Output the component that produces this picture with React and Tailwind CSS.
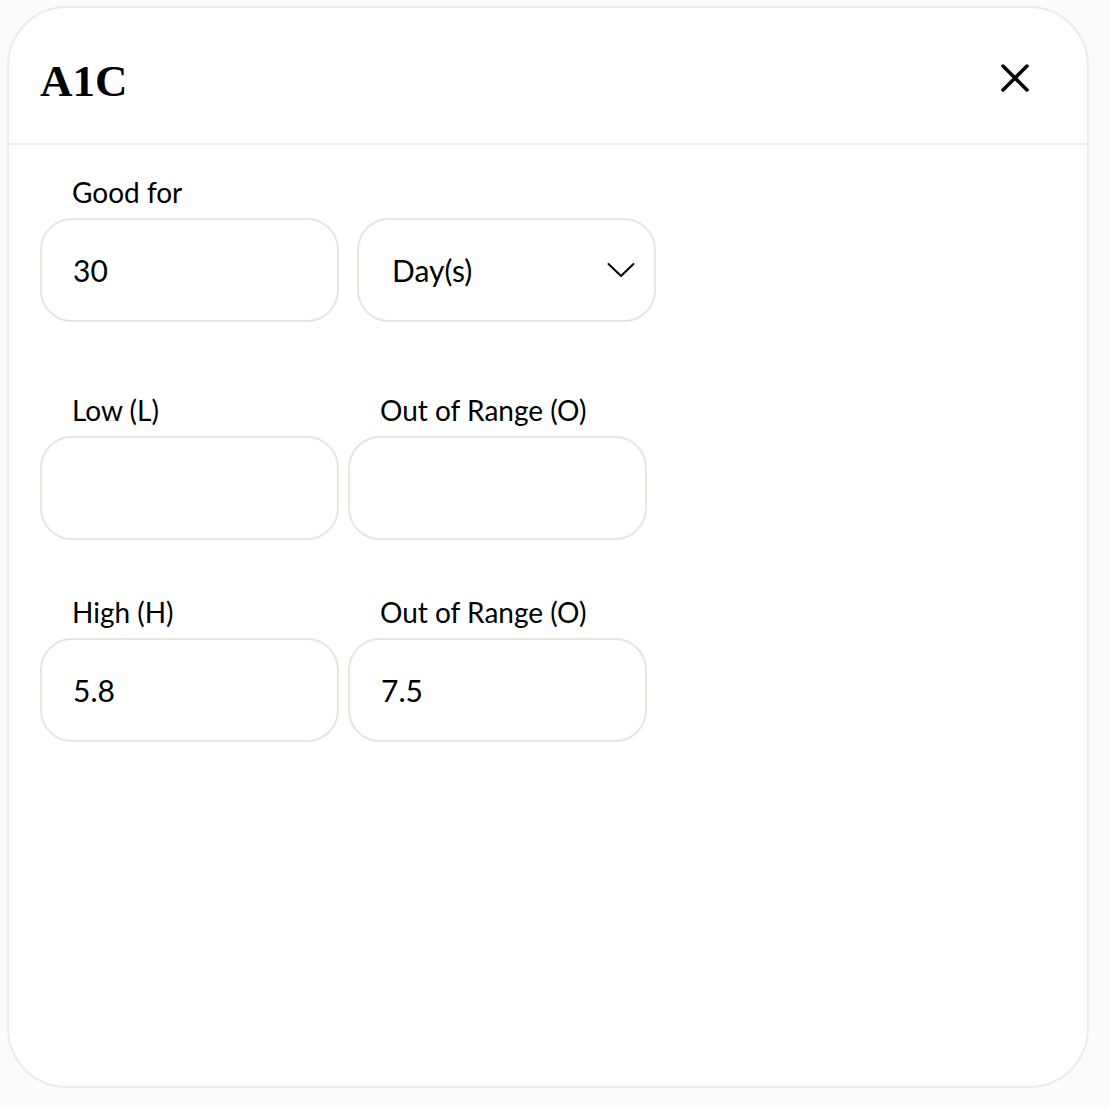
import { useState } from 'react';

// Campo con etiqueta y caja redondeada
function Field({ label, value, onChange, className = '' }) {
  return (
    <div className={`flex flex-col w-[299px] ${className}`}>
      <label className="pl-[32px] text-[28px] leading-[34px] text-black mb-[9px]">{label}</label>
      <input
        type="text"
        value={value}
        onChange={onChange}
        className="h-[104px] w-full rounded-[32px] border-2 border-[#e8e5da] bg-white px-[31px] text-[30px] text-black outline-none"
        style={{ fontFamily: 'Lato, "Noto Sans", sans-serif' }}
      />
    </div>
  );
}

export default function App() {
  const [goodFor, setGoodFor] = useState('30');
  const [low, setLow] = useState('');
  const [lowOut, setLowOut] = useState('');
  const [high, setHigh] = useState('5.8');
  const [highOut, setHighOut] = useState('7.5');

  return (
    <div
      className="min-h-[1108px] w-[1110px] bg-[#fcfbf9] pt-[6px] pl-[7px]"
      style={{ fontFamily: 'Lato, "Noto Sans", sans-serif' }}
    >
      <div className="w-[1082px] h-[1082px] rounded-[60px] border-2 border-[#ebebeb] bg-white overflow-hidden">
        {/* Encabezado */}
        <div className="h-[137px] border-b-2 border-[#f0f0f0] flex items-center justify-between pl-[31px] pr-[56px]">
          <h1
            className="text-[45px] font-bold text-black leading-none mt-[12px]"
            style={{ fontFamily: '"Liberation Serif", "DejaVu Serif", serif' }}
          >
            A1C
          </h1>
          <button className="text-black mt-[4px]">
            <svg width="32" height="32" viewBox="0 0 32 32" fill="none" stroke="currentColor" strokeWidth="3.5" strokeLinecap="round">
              <path d="M4 4 L28 28 M28 4 L4 28" />
            </svg>
          </button>
        </div>

        {/* Cuerpo */}
        <div className="pl-[31px] pt-[30px]">
          <div className="flex gap-[18px]">
            <Field label="Good for" value={goodFor} onChange={e => setGoodFor(e.target.value)} />
            <div className="flex flex-col w-[299px] pt-[43px]">
              <div className="h-[104px] w-full rounded-[32px] border-2 border-[#e8e5da] bg-white pl-[33px] pr-[19px] flex items-center justify-between">
                <span className="text-[30px] text-black">Day(s)</span>
                <svg width="28" height="16" viewBox="0 0 28 16" fill="none" stroke="currentColor" strokeWidth="2" strokeLinecap="round" strokeLinejoin="round">
                  <path d="M1.5 2 L14 14 L26.5 2" />
                </svg>
              </div>
            </div>
          </div>

          <div className="flex gap-[9px] mt-[71px]">
            <Field label="Low (L)" value={low} onChange={e => setLow(e.target.value)} />
            <Field label="Out of Range (O)" value={lowOut} onChange={e => setLowOut(e.target.value)} />
          </div>

          <div className="flex gap-[9px] mt-[55px]">
            <Field label="High (H)" value={high} onChange={e => setHigh(e.target.value)} />
            <Field label="Out of Range (O)" value={highOut} onChange={e => setHighOut(e.target.value)} />
          </div>
        </div>
      </div>
    </div>
  );
}
